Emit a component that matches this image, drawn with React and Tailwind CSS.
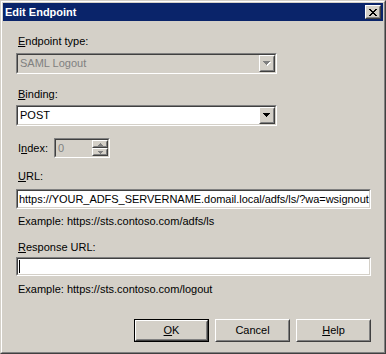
import React from 'react';

// Classic 3D edges
const Sunken = ({ className = '', inner = '', children }) => (
  <div className={`border border-t-[#808080] border-l-[#808080] border-b-white border-r-white ${className}`}>
    <div className={`h-full border border-t-[#404040] border-l-[#404040] border-b-[#d4d0c8] border-r-[#d4d0c8] ${inner}`}>
      {children}
    </div>
  </div>
);

const Raised = ({ className = '', inner = '', children }) => (
  <div className={`border border-t-white border-l-white border-b-[#404040] border-r-[#404040] ${className}`}>
    <div className={`h-full border border-t-[#d4d0c8] border-l-[#d4d0c8] border-b-[#808080] border-r-[#808080] ${inner}`}>
      {children}
    </div>
  </div>
);

const DownArrow = ({ disabled }) => (
  <svg width="8" height="5" viewBox="0 0 8 5" shapeRendering="crispEdges">
    {disabled && (
      <path d="M1 1h7v1H1z M2 2h5v1H2z M3 3h3v1H3z M4 4h1v1H4z" fill="#ffffff" />
    )}
    <path
      d="M0 0h7v1H0z M1 1h5v1H1z M2 2h3v1H2z M3 3h1v1H3z"
      fill={disabled ? '#808080' : '#000000'}
    />
  </svg>
);

const ComboBox = ({ value, disabled }) => (
  <Sunken className="w-[261px] h-[21px]" inner={`flex items-center ${disabled ? 'bg-[#d4d0c8]' : 'bg-white'}`}>
    <span className={`flex-1 pl-[2px] ${disabled ? 'text-[#808080]' : 'text-black'}`}>{value}</span>
    <Raised className="w-[16px] h-[17px] bg-[#d4d0c8]" inner="flex items-center justify-center">
      <DownArrow disabled={disabled} />
    </Raised>
  </Sunken>
);

const Label = ({ k, rest, pre = '', className = '' }) => (
  <div className={`pl-[2px] ${className}`}>
    {pre}
    <u>{k}</u>
    {rest}
  </div>
);

const PushButton = ({ children, isDefault }) => {
  const body = (
    <Raised className="h-full bg-[#d4d0c8]" inner="flex items-center justify-center">
      {children}
    </Raised>
  );
  return isDefault ? (
    <div className="w-[75px] h-[23px] border border-black">{body}</div>
  ) : (
    <div className="w-[75px] h-[23px]">{body}</div>
  );
};

const CloseGlyph = () => (
  <svg width="8" height="7" viewBox="0 0 8 7" shapeRendering="crispEdges" fill="#000">
    <path d="M0 0h2v1H0z M6 0h2v1H6z M1 1h2v1H1z M5 1h2v1H5z M2 2h4v1H2z M3 3h2v1H3z M2 4h4v1H2z M1 5h2v1H1z M5 5h2v1H5z M0 6h2v1H0z M6 6h2v1H6z" />
  </svg>
);

const SpinArrow = ({ up }) => (
  <svg width="5" height="3" viewBox="0 0 5 3" shapeRendering="crispEdges" fill="#808080">
    {up ? (
      <path d="M2 0h1v1H2z M1 1h3v1H1z M0 2h5v1H0z" />
    ) : (
      <path d="M0 0h5v1H0z M1 1h3v1H1z M2 2h1v1H2z" />
    )}
  </svg>
);

export default function App() {
  return (
    <div className="w-[386px] h-[354px] bg-[#d4d0c8] border border-t-[#d4d0c8] border-l-[#d4d0c8] border-b-[#404040] border-r-[#404040] font-['Liberation_Sans',Arial,sans-serif] text-[11px] leading-[13px] text-black">
      <div className="h-full border border-t-white border-l-white border-b-[#808080] border-r-[#808080] p-px flex flex-col">
        {/* Title bar */}
        <div className="h-[18px] bg-[#0a246a] flex items-center justify-between pl-[2px] pr-[2px] shrink-0">
          <span className="font-bold text-white">Edit Endpoint</span>
          <Raised className="w-[16px] h-[14px] bg-[#d4d0c8]" inner="flex items-center justify-center">
            <CloseGlyph />
          </Raised>
        </div>

        <div className="flex flex-col pl-[13px] pr-[12px]">
          <Label className="mt-[14px]" k="E" rest="ndpoint type:" />
          <div className="mt-[5px]">
            <ComboBox value="SAML Logout" disabled />
          </div>

          <Label className="mt-[14px]" k="B" rest="inding:" />
          <div className="mt-[4px]">
            <ComboBox value="POST" />
          </div>

          <div className="mt-[12px] flex items-center">
            <Label className="w-[38px] pt-px" pre="I" k="n" rest="dex:" />
            <Sunken className="w-[56px] h-[20px]" inner="flex bg-[#d4d0c8]">
              <span className="flex-1 pl-[2px] pt-[2px] text-[#808080]">0</span>
              <div className="w-[16px] flex flex-col">
                <Raised className="h-[9px] bg-[#d4d0c8]" inner="flex items-center justify-center">
                  <SpinArrow up />
                </Raised>
                <Raised className="h-[9px] bg-[#d4d0c8]" inner="flex items-center justify-center">
                  <SpinArrow />
                </Raised>
              </div>
            </Sunken>
          </div>

          <Label className="mt-[12px]" k="U" rest="RL:" />
          <Sunken className="mt-[6px] w-full h-[20px]" inner="bg-white flex items-center">
            <span className="pl-px whitespace-nowrap tracking-[-0.04px]">
              https://YOUR_ADFS_SERVERNAME.domail.local/adfs/ls/?wa=wsignout
            </span>
          </Sunken>
          <div className="mt-[6px] pl-[2px]">Example: https://sts.contoso.com/adfs/ls</div>

          <Label className="mt-[13px]" k="R" rest="esponse URL:" />
          <Sunken className="mt-[3px] w-full h-[19px]" inner="bg-white flex items-center">
            <div className="ml-[1px] w-px h-[13px] bg-black" />
          </Sunken>
          <div className="mt-[7px] pl-[2px]">Example: https://sts.contoso.com/logout</div>

          <div className="mt-[23px] flex justify-end gap-[6px]">
            <PushButton isDefault>
              <span><u>O</u>K</span>
            </PushButton>
            <PushButton>Cancel</PushButton>
            <PushButton>
              <span><u>H</u>elp</span>
            </PushButton>
          </div>
        </div>
      </div>
    </div>
  );
}
